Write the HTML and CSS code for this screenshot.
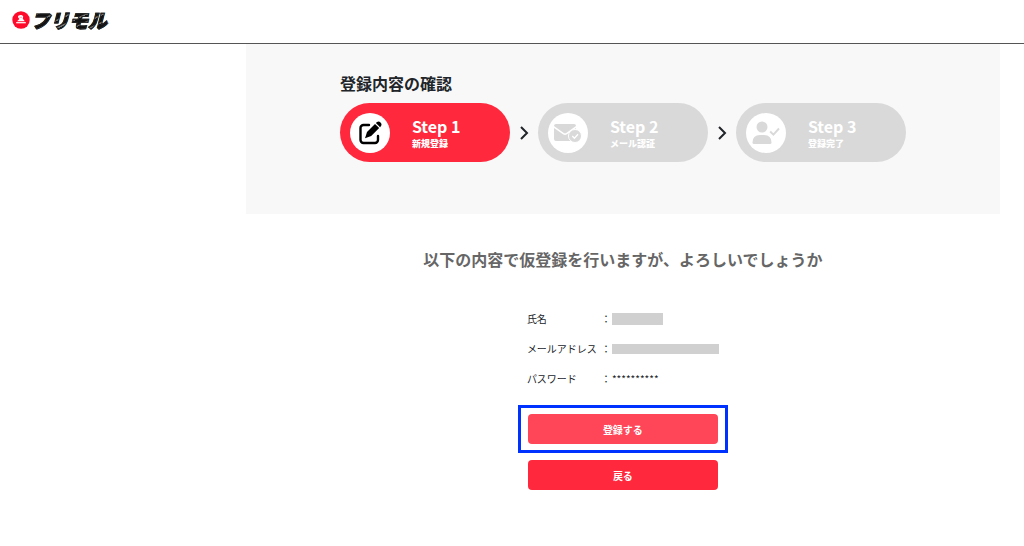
FILE: index.html
```
<!DOCTYPE html>
<html lang="ja">
<head>
    <meta charset="UTF-8">
    <meta name="viewport" content="width=device-width, initial-scale=1.0">
    <title>登録内容の確認 | フリモル</title>
    <link rel="stylesheet" href="styles.css">
</head>
<body>
    <header class="header">
        <a href="#" class="logo">
            <svg class="logo-mark" viewBox="0 0 18 18" aria-hidden="true">
                <circle cx="9" cy="9" r="8.7" fill="#ff0a2b"/>
                <path d="M6 6.200 C5.600 3.400 10.600 3.200 11.200 5.400 L10.800 7.800 L12.800 10.200 H5 L7.400 8 Z" fill="#fff"/>
                <path d="M7.5 6.300 H10" stroke="#ff7a8c" stroke-width="0.7"/>
                <path d="M4.2 11.7 H13.8" stroke="#fff" stroke-width="1.2"/>
            </svg>
            <span class="logo-text">フリモル</span>
        </a>
    </header>

    <main class="main">
        <section class="progress">
            <div class="progress-inner">
                <h1>登録内容の確認</h1>
                <div class="steps">
                    <div class="step active">
                        <div class="step-icon">
                            <svg viewBox="0 0 24 24" aria-hidden="true">
                                <path d="M11 4 H5.500 A3 3 0 0 0 2.500 7 V19 A3 3 0 0 0 5.500 22 H17 A3 3 0 0 0 20 19 V15" fill="none" stroke="#000" stroke-width="2.4" stroke-linecap="round"/>
                                <path d="M17 2.900 L21.200 7.100 L13.200 15.100 L7 17.200 L9 10.900 Z" fill="#000"/>
                                <path d="M17.900 2 L19 1 Q20.800 -0.300 22.500 1.500 Q24.200 3.300 23 5 L22.100 6.200 Z" fill="#000"/>
                            </svg>
                        </div>
                        <div class="step-text">
                            <div class="step-number">Step 1</div>
                            <div class="step-name">新規登録</div>
                        </div>
                    </div>
                    <svg class="arrow" viewBox="0 0 10 14" aria-hidden="true"><path d="M2 1 L8 7 L2 13"/></svg>
                    <div class="step">
                        <div class="step-icon">
                            <svg class="wide" viewBox="0 0 28 20" aria-hidden="true">
                                <path d="M2 1 H20 Q22 1 22 3 L12.600 9.800 Q11 10.800 9.400 9.800 L0 3 Q0 1 2 1 Z" fill="#d9d9d9"/>
                                <path d="M0 5 L9 11.300 Q11 12.600 13 11.300 L22 5 V16 Q22 18 20 18 H2 Q0 18 0 16 Z" fill="#d9d9d9"/>
                                <circle cx="21" cy="13" r="6.500" fill="#d9d9d9" stroke="#fff" stroke-width="1"/>
                                <path d="M18.300 13 L20.400 15.200 L24 11.200" fill="none" stroke="#fff" stroke-width="1.300"/>
                            </svg>
                        </div>
                        <div class="step-text">
                            <div class="step-number">Step 2</div>
                            <div class="step-name">メール認証</div>
                        </div>
                    </div>
                    <svg class="arrow" viewBox="0 0 10 14" aria-hidden="true"><path d="M2 1 L8 7 L2 13"/></svg>
                    <div class="step">
                        <div class="step-icon">
                            <svg class="wide" viewBox="0 0 28 24" aria-hidden="true">
                                <circle cx="10" cy="6" r="5.500" fill="#d9d9d9"/>
                                <path d="M0.500 21.500 Q0.500 14 8 14 H12 Q19.500 14 19.500 21.500 Q19.500 23 18 23 H2 Q0.500 23 0.500 21.500 Z" fill="#d9d9d9"/>
                                <path d="M18.200 10.500 L21.400 13.700 L27 7.500" fill="none" stroke="#d9d9d9" stroke-width="1.900"/>
                            </svg>
                        </div>
                        <div class="step-text">
                            <div class="step-number">Step 3</div>
                            <div class="step-name">登録完了</div>
                        </div>
                    </div>
                </div>
            </div>
        </section>

        <section class="confirm">
            <h2>以下の内容で仮登録を行いますが、よろしいでしょうか</h2>

            <dl class="details">
                <dt>氏名</dt>
                <dd><span class="mask mask-name"></span></dd>
                <dt>メールアドレス</dt>
                <dd><span class="mask mask-mail"></span></dd>
                <dt>パスワード</dt>
                <dd>**********</dd>
            </dl>

            <form class="actions">
                <div class="highlight">
                    <button type="submit" class="btn btn-submit">登録する</button>
                </div>
                <button type="button" class="btn">戻る</button>
            </form>
        </section>
    </main>
</body>
</html>
```
FILE: styles.css
```
body {
    margin: 0;
    font-family: "Noto Sans CJK JP", sans-serif;
    color: #212529;
    background-color: #fff;
}
.header {
    display: flex;
    padding: 9px 12px 13px;
    border-bottom: 1px solid #555;
}
.logo {
    display: flex;
    align-items: center;
    gap: 1px;
    height: 21px;
    text-decoration: none;
}
.logo-mark {
    width: 18px;
    height: 18px;
}
.logo-text {
    font-size: 19px;
    line-height: 20px;
    font-weight: 900;
    font-style: italic;
    color: transparent;
    -webkit-text-stroke: 1px #222;
    background: repeating-linear-gradient(155deg, #111 0 5px, #777 6px 7px);
    -webkit-background-clip: text;
    background-clip: text;
}
.main {
    margin-left: 24%;
    margin-right: 24px;
}
.progress {
    padding: 27px 20px 52px;
    background-color: #f8f8f8;
}
.progress-inner {
    width: fit-content;
    margin: 0 auto;
}
h1 {
    margin: 0 0 8px;
    font-size: 16px;
    line-height: 24px;
    font-weight: bold;
}
.steps {
    display: flex;
    align-items: center;
    gap: 9px;
}
.step {
    display: flex;
    align-items: center;
    gap: 22px;
    box-sizing: border-box;
    width: 170px;
    height: 59px;
    padding: 0 10px;
    border-radius: 30px;
    background-color: #d9d9d9;
    color: #fff;
}
.step.active {
    background-color: #ff283d;
}
.step-icon {
    display: flex;
    align-items: center;
    justify-content: center;
    width: 40px;
    height: 40px;
    border-radius: 50%;
    background-color: #fff;
}
.step-icon svg {
    width: 24px;
    height: 24px;
}
.step-icon .wide {
    width: 28px;
}
.step-number {
    font-size: 16px;
    line-height: 22px;
    font-weight: bold;
}
.step-name {
    font-size: 9px;
    line-height: 14px;
    font-weight: 900;
}
.arrow {
    width: 10px;
    height: 14px;
    fill: none;
    stroke: #212529;
    stroke-width: 2;
}
.confirm {
    padding: 33px 0 56px;
}
h2 {
    margin: 0;
    font-size: 16px;
    line-height: 24px;
    font-weight: bold;
    text-align: center;
    color: #666;
}
.details {
    display: grid;
    grid-template-columns: 74px 1fr;
    row-gap: 14px;
    width: 192px;
    margin: 40px auto 18px;
    font-size: 10px;
    line-height: 16px;
}
.details dd {
    display: flex;
    align-items: center;
    margin: 0;
}
.details dd::before {
    content: "：";
    width: 11px;
}
.mask {
    background-color: #d0d0d0;
}
.mask-name {
    width: 51px;
    height: 12px;
}
.mask-mail {
    width: 107px;
    height: 10px;
}
.actions {
    display: flex;
    flex-direction: column;
    align-items: center;
    gap: 7px;
}
.highlight {
    padding: 6px 7px;
    border: 3px solid #0032ff;
}
.btn {
    display: block;
    width: 190px;
    height: 30px;
    padding: 0;
    border: none;
    border-radius: 4px;
    background-color: #ff283d;
    color: #fff;
    font-family: inherit;
    font-size: 10px;
    font-weight: bold;
    cursor: pointer;
}
.btn-submit {
    background-color: #ff4558;
}
```
